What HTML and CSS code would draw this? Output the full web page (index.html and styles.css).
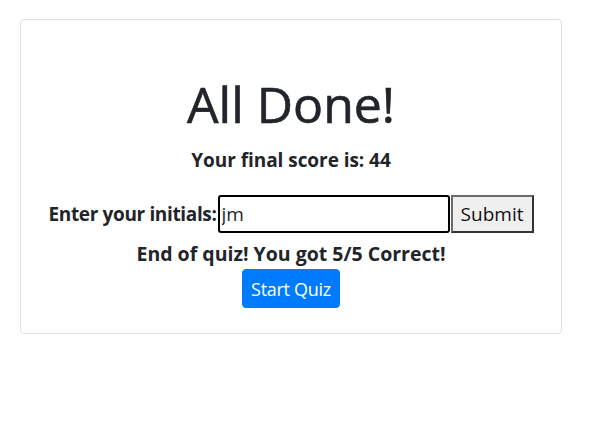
FILE: index.html
```html
<!DOCTYPE html>
<html lang="en">
<head>
<meta charset="utf-8">
<title>Quiz</title>
<link rel="stylesheet" href="styles.css">
</head>
<body>
<div class="wrap">
  <div class="card">
    <h1 class="title">All Done!</h1>
    <p class="score">Your final score is: 44</p>
    <form class="entry">
      <label class="label" for="initials">Enter your initials:</label>
      <input class="initials" id="initials" type="text" value="jm">
      <button class="submit" type="button">Submit</button>
    </form>
    <p class="result">End of quiz! You got 5/5 Correct!</p>
    <button class="start" type="button">Start Quiz</button>
  </div>
</div>
</body>
</html>
```
FILE: styles.css
```css
html, body {
  margin: 0;
  padding: 0;
  background: #fff;
}
body {
  font-family: "Open Sans", "Noto Sans", sans-serif;
  color: #212529;
}
.wrap {
  padding: 19px 0 0 20px;
}
.card {
  box-sizing: border-box;
  width: 542px;
  height: 315px;
  border: 1px solid rgba(0,0,0,.125);
  border-radius: 4px;
  text-align: center;
  padding-top: 54px;
}
.title {
  margin: 0;
  font-size: 50px;
  font-weight: 400;
  line-height: 60px;
  letter-spacing: 0;
  -webkit-text-stroke: 0.6px #212529;
}
.score {
  margin: 11px 0 0;
  font-size: 19px;
  font-weight: 700;
  line-height: 30px;
  letter-spacing: -0.05px;
}
.entry {
  margin: 20px 0 0;
  display: flex;
  justify-content: center;
  align-items: center;
}
.label {
  font-size: 19px;
  font-weight: 700;
  letter-spacing: -0.35px;
}
.initials {
  box-sizing: border-box;
  width: 232px;
  height: 38px;
  margin: 0 0 0 1px;
  border: 2px solid #000;
  border-radius: 3px;
  padding: 0 2px;
  font-family: inherit;
  font-size: 19px;
  color: #212529;
  outline: none;
}
.submit {
  box-sizing: border-box;
  height: 38px;
  width: 83px;
  margin: 0 0 0 1px;
  padding: 0;
  background: #efefef;
  border: 2px solid #333;
  border-left-color: #6a6a6a;
  border-top-color: #6a6a6a;
  font-family: inherit;
  font-size: 19px;
  color: #111;
}
.result {
  margin: 6px 0 0;
  font-size: 19.5px;
  font-weight: 700;
  line-height: 30px;
  letter-spacing: 0;
}
.start {
  box-sizing: border-box;
  height: 39px;
  width: 98px;
  padding: 0;
  background: #007bff;
  color: #fff;
  border: 1px solid #007bff;
  border-radius: 4px;
  font-family: inherit;
  font-size: 18px;
  letter-spacing: -0.3px;
}
```
